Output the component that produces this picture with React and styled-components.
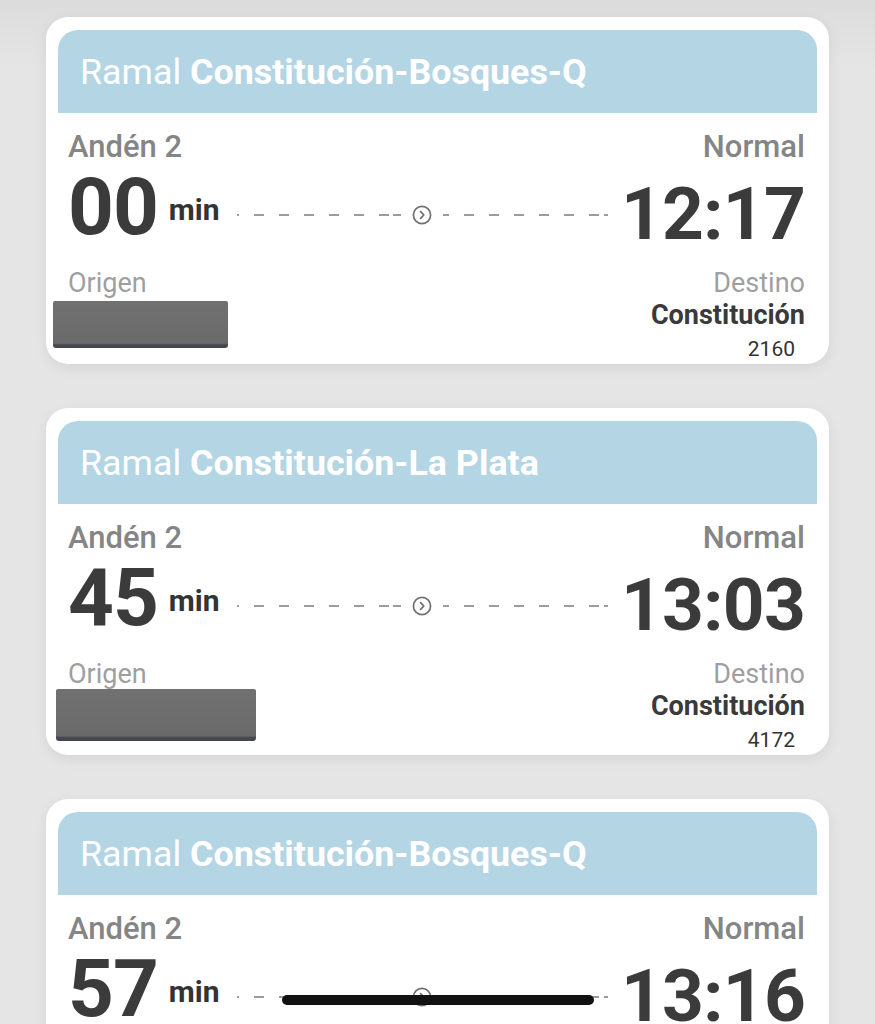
import React from "react";
import styled, { createGlobalStyle } from "styled-components";

const GlobalStyle = createGlobalStyle`
  html, body {
    margin: 0;
    padding: 0;
    background: #e5e5e5;
  }
  body {
    font-family: Roboto, "Noto Sans", "Liberation Sans", sans-serif;
    -webkit-font-smoothing: antialiased;
  }
`;

const Page = styled.main`
  min-height: 1024px;
  padding: 17px 46px 40px;
  box-sizing: border-box;
  display: flex;
  flex-direction: column;
  gap: 44px;
  background: linear-gradient(#dcdcdc 0, #e5e5e5 70px, #e5e5e5 100%);
`;

const Card = styled.section`
  background: #ffffff;
  border-radius: 22px;
  padding: 13px 12px 4px;
  box-shadow: 0 4px 14px rgba(0, 0, 0, 0.07);
`;

const Header = styled.header`
  height: 83px;
  background: #b3d5e4;
  border-radius: 20px 20px 0 0;
  padding-left: 22px;
  display: flex;
  align-items: center;
  color: #ffffff;
  font-size: 35.8px;
  font-weight: 400;
  white-space: nowrap;
  overflow: hidden;

  strong {
    font-weight: 700;
    margin-left: 9px;
  }
`;

const Body = styled.div`
  padding: 0 12px 0 10px;
`;

const Row = styled.div`
  display: flex;
  justify-content: space-between;
  align-items: flex-start;
`;

const StatusRow = styled(Row)`
  margin-top: 18px;
  font-size: 31px;
  line-height: 1;
  font-weight: 500;
  color: #858585;
`;

const TimeRow = styled(Row)`
  margin-top: 5px;
  height: 103px;
`;

const Minutes = styled.div`
  display: flex;
  align-items: flex-start;
  color: #3b3b3b;
`;

const MinutesValue = styled.span`
  font-size: 80px;
  line-height: 1;
  font-weight: 700;
  letter-spacing: -1px;
`;

const MinutesUnit = styled.span`
  margin: 28px 0 0 11px;
  font-size: 30px;
  line-height: 1;
  font-weight: 700;
  color: #333;
`;

const Track = styled.div`
  flex: 1;
  display: flex;
  align-items: center;
  gap: 10px;
  margin: 38px 13px 0 17px;
  height: 20px;
`;

const Dashes = styled.div`
  flex: 1;
  height: 2px;
  background-image: repeating-linear-gradient(
    to right,
    #9c9c9c 0,
    #9c9c9c 10px,
    transparent 10px,
    transparent 25px
  );
  background-position: ${(p) => (p.$start ? "-8px 0" : "-4px 0")};
`;

const Clock = styled.span`
  margin-top: 11px;
  font-size: 73px;
  line-height: 1;
  font-weight: 700;
  color: #3b3b3b;
  letter-spacing: -0.8px;
`;

const Column = styled.div`
  display: flex;
  flex-direction: column;
  align-items: ${(p) => (p.$right ? "flex-end" : "flex-start")};
`;

const Label = styled.span`
  font-size: 27px;
  line-height: 1;
  color: #9f9f9f;
`;

const Redacted = styled.div`
  margin-top: ${(p) => p.$top}px;
  margin-left: ${(p) => p.$left}px;
  width: ${(p) => p.$w}px;
  height: ${(p) => p.$h}px;
  border-radius: 2px 2px 3px 3px;
  background: linear-gradient(#717171 0, #6a6a6a 90%, #4a4a52 93%, #43434b 100%);
`;

const Station = styled.span`
  margin-top: 5px;
  font-size: 27px;
  line-height: 1;
  font-weight: 700;
  color: #3a3a3a;
`;

const TrainNumber = styled.span`
  margin: 10px 10px 0 0;
  font-size: 21px;
  line-height: 1;
  color: #333;
`;

const HomeIndicator = styled.div`
  position: fixed;
  left: 282px;
  top: 995px;
  width: 312px;
  height: 10px;
  border-radius: 5px;
  background: #111;
`;

const NextIcon = () => (
  <svg width="22" height="22" viewBox="0 0 22 22" fill="none">
    <circle cx="11" cy="11" r="8.6" stroke="#707070" strokeWidth="1.7" />
    <path
      d="M9.6 7.6 L12.8 11 L9.6 14.4"
      stroke="#707070"
      strokeWidth="1.8"
      strokeLinecap="round"
      strokeLinejoin="round"
    />
  </svg>
);

const trains = [
  {
    ramal: "Constitución-Bosques-Q",
    anden: "Andén 2",
    estado: "Normal",
    minutos: "00",
    hora: "12:17",
    destino: "Constitución",
    numero: "2160",
    redacted: { top: 4, left: -15, w: 175, h: 47 },
  },
  {
    ramal: "Constitución-La Plata",
    anden: "Andén 2",
    estado: "Normal",
    minutos: "45",
    hora: "13:03",
    destino: "Constitución",
    numero: "4172",
    redacted: { top: 1, left: -12, w: 200, h: 52 },
  },
  {
    ramal: "Constitución-Bosques-Q",
    anden: "Andén 2",
    estado: "Normal",
    minutos: "57",
    hora: "13:16",
    destino: "Constitución",
    numero: "",
    redacted: { top: 4, left: -15, w: 175, h: 47 },
  },
];

const TrainCard = ({ train }) => (
  <Card>
    <Header>
      Ramal<strong>{train.ramal}</strong>
    </Header>
    <Body>
      <StatusRow>
        <span>{train.anden}</span>
        <span>{train.estado}</span>
      </StatusRow>
      <TimeRow>
        <Minutes>
          <MinutesValue>{train.minutos}</MinutesValue>
          <MinutesUnit>min</MinutesUnit>
        </Minutes>
        <Track>
          <Dashes $start />
          <NextIcon />
          <Dashes />
        </Track>
        <Clock>{train.hora}</Clock>
      </TimeRow>
      <Row>
        <Column>
          <Label>Origen</Label>
          <Redacted
            $top={train.redacted.top}
            $left={train.redacted.left}
            $w={train.redacted.w}
            $h={train.redacted.h}
          />
        </Column>
        <Column $right>
          <Label>Destino</Label>
          <Station>{train.destino}</Station>
          <TrainNumber>{train.numero}</TrainNumber>
        </Column>
      </Row>
    </Body>
  </Card>
);

export default function App() {
  return (
    <>
      <GlobalStyle />
      <Page>
        {trains.map((t, i) => (
          <TrainCard key={i} train={t} />
        ))}
      </Page>
      <HomeIndicator />
    </>
  );
}
